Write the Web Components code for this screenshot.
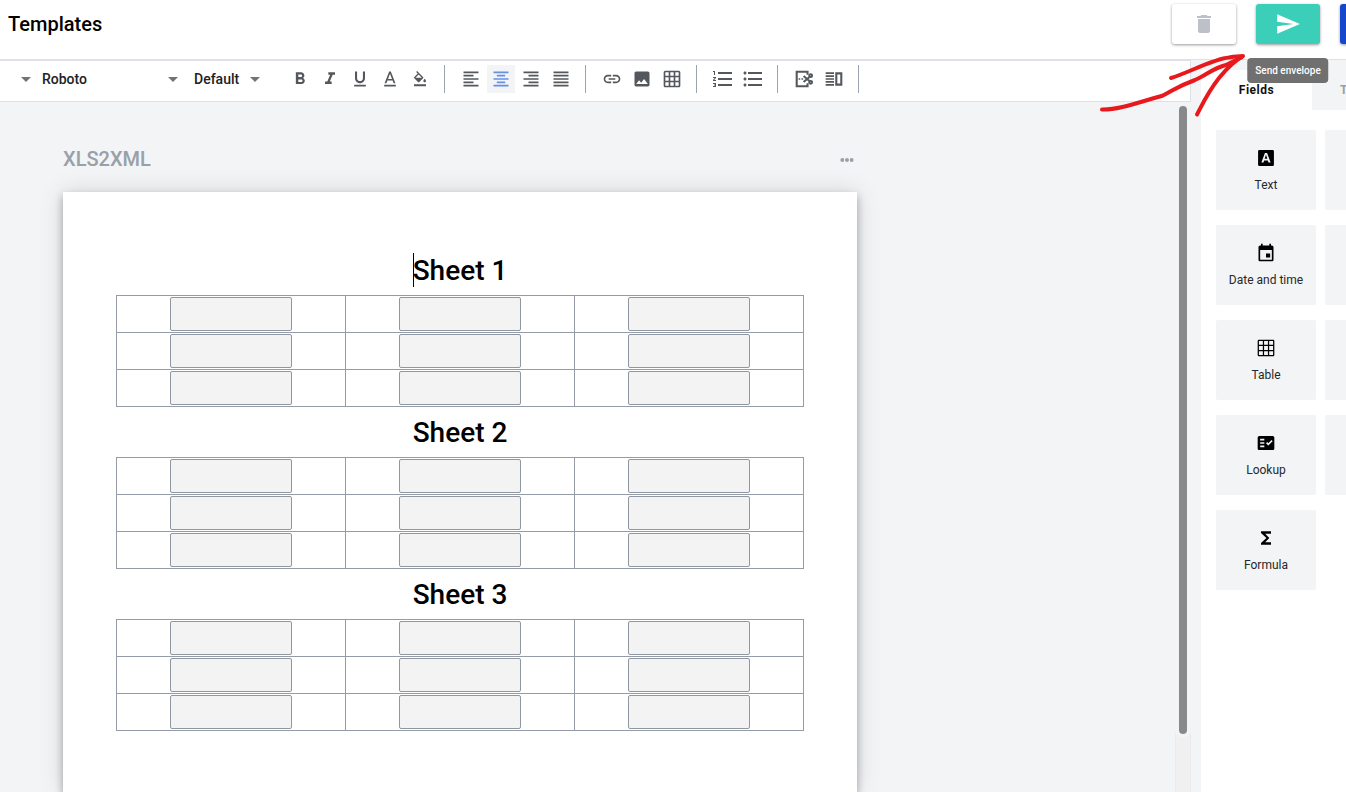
<!DOCTYPE html>
<html lang="en">
<head>
<meta charset="utf-8">
<title>Templates</title>
<style>
  html, body { margin: 0; height: 100%; }
  body { font-family: Roboto, "Liberation Sans", sans-serif; background: #fff; color: #000; overflow: hidden; }
</style>
</head>
<body>
<template-app></template-app>
<script>
const ICONS = {
  trash: '<path d="M6 19c0 1.100.9 2 2 2h8c1.100 0 2-.9 2-2V7H6v12zM19 4h-3.500l-1-1h-5l-1 1H5v2h14V4z"/>',
  send: '<path d="M2 21l21-9L2 3v7l15 2-15 2z"/>',
  down: '<path d="M7 10l5 5 5-5z"/>',
  bold: '<path d="M15.600 10.790c.970-.670 1.650-1.770 1.650-2.790 0-2.260-1.750-4-4-4H7v14h7.040c2.090 0 3.710-1.700 3.710-3.790 0-1.520-.860-2.820-2.150-3.420zM10 6.500h3c.830 0 1.500.670 1.500 1.500s-.670 1.500-1.500 1.500h-3v-3zm3.500 9H10v-3h3.500c.830 0 1.500.670 1.500 1.500s-.670 1.500-1.500 1.500z"/>',
  italic: '<path d="M10 4v3h2.210l-3.420 8H6v3h8v-3h-2.210l3.420-8H18V4z"/>',
  underline: '<path d="M12 17c3.310 0 6-2.690 6-6V3h-2.500v8c0 1.930-1.570 3.500-3.500 3.500S8.500 12.930 8.500 11V3H6v8c0 3.310 2.690 6 6 6zm-7 2v2h14v-2H5z"/>',
  color: '<path d="M5 19h14v2H5zM11 3L5.500 17h2.200l1.200-3.200h6.200l1.200 3.200h2.200L13 3h-2zm-1.400 9L12 5.700 14.400 12H9.600z"/>',
  fill: '<path d="M16.560 8.940L7.620 0 6.210 1.410l2.380 2.380-5.150 5.150c-.590.590-.590 1.540 0 2.120l5.500 5.500c.290.290.680.440 1.060.440s.770-.150 1.060-.440l5.500-5.500c.590-.580.590-1.530 0-2.120zM5.210 10L10 5.210 14.790 10H5.210zM19 11.500s-2 2.170-2 3.500c0 1.100.900 2 2 2s2-.900 2-2c0-1.330-2-3.500-2-3.500zM3 20h18v2.800H3z"/>',
  left: '<path d="M15 15H3v2h12v-2zm0-8H3v2h12V7zM3 13h18v-2H3v2zm0 8h18v-2H3v2zM3 3v2h18V3H3z"/>',
  center: '<path d="M7 15v2h10v-2H7zm-4 6h18v-2H3v2zm0-8h18v-2H3v2zm4-6v2h10V7H7zM3 3v2h18V3H3z"/>',
  right: '<path d="M3 21h18v-2H3v2zm6-4h12v-2H9v2zm-6-4h18v-2H3v2zm6-4h12V7H9v2zM3 3v2h18V3H3z"/>',
  justify: '<path d="M3 21h18v-2H3v2zm0-4h18v-2H3v2zm0-4h18v-2H3v2zm0-4h18V7H3v2zm0-6v2h18V3H3z"/>',
  link: '<path d="M3.900 12c0-1.710 1.390-3.100 3.100-3.100h4V7H7c-2.760 0-5 2.240-5 5s2.240 5 5 5h4v-1.900H7c-1.710 0-3.100-1.390-3.100-3.100zM8 13h8v-2H8v2zm9-6h-4v1.900h4c1.710 0 3.100 1.390 3.100 3.100s-1.390 3.100-3.100 3.100h-4V17h4c2.760 0 5-2.240 5-5s-2.240-5-5-5z"/>',
  image: '<path d="M21 19V5c0-1.100-.9-2-2-2H5c-1.100 0-2 .9-2 2v14c0 1.100.9 2 2 2h14c1.100 0 2-.9 2-2zM8.500 13.500l2.500 3.010L14.500 12l4.500 6H5l3.500-4.500z"/>',
  grid: '<path d="M20 2H4c-1.100 0-2 .9-2 2v16c0 1.100.9 2 2 2h16c1.100 0 2-.9 2-2V4c0-1.100-.9-2-2-2zM8 20H4v-4h4v4zm0-6H4v-4h4v4zm0-6H4V4h4v4zm6 12h-4v-4h4v4zm0-6h-4v-4h4v4zm0-6h-4V4h4v4zm6 12h-4v-4h4v4zm0-6h-4v-4h4v4zm0-6h-4V4h4v4z"/>',
  numbered: '<path d="M2 17h2v.5H3v1h1v.5H2v1h3v-4H2v1zm1-9h1V4H2v1h1v3zm-1 3h1.800L2 13.100v.9h3v-1H3.200L5 10.900V10H2v1zm5-6v2h14V5H7zm0 14h14v-2H7v2zm0-6h14v-2H7v2z"/>',
  bullets: '<path d="M4 10.500c-.83 0-1.500.67-1.500 1.500s.67 1.500 1.500 1.500 1.500-.67 1.500-1.500-.67-1.500-1.500-1.500zm0-6c-.83 0-1.500.67-1.500 1.500S3.170 7.500 4 7.500 5.500 6.830 5.500 6 4.830 4.500 4 4.500zm0 12c-.83 0-1.500.68-1.500 1.500s.68 1.500 1.500 1.500 1.500-.68 1.500-1.500-.67-1.500-1.500-1.500zM7 19h14v-2H7v2zm0-6h14v-2H7v2zm0-8v2h14V5H7z"/>',
  cut: '<path d="M2 2h15.500v5H15V4.500H4.500v15H15V17h2.500v5H2zM5.500 11h2v2h-2zM9 11h2v2H9z"/><g fill="none" stroke="currentColor" stroke-width="2.400"><circle cx="20" cy="8" r="1.700"/><circle cx="20" cy="16" r="1.700"/><path d="M18.600 9.500L11.500 15.500M18.600 14.500L11.500 8.500"/></g>',
  columns: '<path d="M2 4h10v2H2zM2 7.500h10v2H2zM2 11h10v2H2zM2 14.500h10v2H2zM2 18h10v2H2zM13.500 4H22v16h-8.500zM16 6.500v11h3.500v-11z" fill-rule="evenodd"/>',
  more: '<circle cx="5" cy="12" r="2.900"/><circle cx="12" cy="12" r="2.900"/><circle cx="19" cy="12" r="2.900"/>',
  text: '<path d="M4 2.500h16A1.500 1.500 0 0 1 21.500 4v16a1.500 1.500 0 0 1-1.500 1.500H4A1.500 1.500 0 0 1 2.500 20V4A1.500 1.500 0 0 1 4 2.500zM10.700 6L6.500 17.500H9l.8-2.500h4.400l.8 2.500h2.500L13.300 6zM10.400 13L12 8.200 13.600 13z" fill-rule="evenodd"/>',
  date: '<path d="M19 3h-1V1h-2v2H8V1H6v2H5c-1.110 0-2 .9-2 2v15c0 1.100.89 2 2 2h14c1.100 0 2-.9 2-2V5c0-1.100-.9-2-2-2zm0 17H5V8.500h14V20zM12 12.500h5v5h-5z"/>',
  lookup: '<path d="M20 3.500H4c-1.100 0-2 .9-2 2v13c0 1.100.9 2 2 2h16c1.100 0 2-.9 2-2v-13c0-1.100-.9-2-2-2zM10 17H5v-2h5v2zm0-4H5v-2h5v2zm0-4H5V7h5v2zm4.800 6L12 12.200l1.400-1.400 1.400 1.400 3.800-3.800L20 9.800z"/>',
  table: '<path d="M3.500 2h17A1.500 1.500 0 0 1 22 3.500v17a1.500 1.500 0 0 1-1.500 1.500h-17A1.500 1.500 0 0 1 2 20.500v-17A1.500 1.500 0 0 1 3.500 2zM3.500 3.500v4.700h4.700V3.500zM9.700 3.500v4.700h4.600V3.500zM15.800 3.500v4.700h4.700V3.500zM3.500 9.700v4.600h4.700V9.700zM9.700 9.700v4.600h4.600V9.700zM15.800 9.700v4.600h4.700V9.700zM3.500 15.800v4.700h4.700v-4.700zM9.700 15.800v4.700h4.600v-4.700zM15.800 15.800v4.700h4.700v-4.700z" fill-rule="evenodd"/>',
  sigma: '<path d="M18 4H6v2l6.500 6L6 18v2h12v-3h-7l5-5-5-5h7z"/>'
};

function define(name, render) {
  customElements.define(name, class extends HTMLElement {
    connectedCallback() {
      if (this.shadowRoot) return;
      const t = document.createElement('template');
      t.innerHTML = render(this);
      this.attachShadow({ mode: 'open' }).append(t.content.cloneNode(true));
    }
  });
}

define('ui-icon', el => `
  <style>
    :host { display: block; width: var(--icon, 20px); height: var(--icon, 20px); }
    svg { display: block; width: 100%; height: 100%; fill: currentColor; }
  </style>
  <svg viewBox="0 0 24 24" aria-hidden="true">${ICONS[el.getAttribute('name')] || ''}</svg>`);

define('action-button', el => `
  <style>
    :host { display: block; position: relative; flex: none; --icon: 24px; }
    button { display: flex; align-items: center; justify-content: center; width: 64px; height: 40px; padding: 0;
      border: 0; border-radius: 3px; background: var(--fill, #fff); color: var(--ink, #fff);
      box-shadow: 0 1px 3px rgba(0,0,0,.4); }
  </style>
  <button type="button" aria-label="${el.getAttribute('label')}"><slot></slot></button>
  <slot name="tip"></slot>`);

define('hover-tip', () => `
  <style>
    :host { position: absolute; z-index: 3; top: 54px; left: 50%; transform: translateX(-50%); display: block;
      padding: 0 8px; border-radius: 4px; background: #707070; color: #fff;
      font-size: 10px; font-weight: 500; line-height: 25px; white-space: nowrap; }
  </style>
  <slot></slot>`);

define('app-header', () => `
  <style>
    :host { display: flex; justify-content: space-between; height: 59px; box-sizing: border-box; padding: 4px 0 0 8px;
      background: #fff; }
    h1 { margin: 0; font-size: 20px; line-height: 40px; font-weight: 500; }
    .actions { display: flex; gap: 20px; width: 174px; }
    .trash { --ink: #bcc1c9; }
    .send { --fill: #3bceb8; --icon: 26px; }
    .next { --fill: #1447cc; }
  </style>
  <h1>Templates</h1>
  <div class="actions">
    <action-button class="trash" label="Delete"><ui-icon name="trash"></ui-icon></action-button>
    <action-button class="send" label="Send envelope"><ui-icon name="send"></ui-icon><hover-tip slot="tip">Send envelope</hover-tip></action-button>
    <action-button class="next" label="Next"></action-button>
  </div>`);

define('tool-select', el => `
  <style>
    :host { display: flex; align-items: center; }
    select { flex: 1; min-width: 0; appearance: none; border: 0; padding: 0; margin: 0; background: none; color: #202124;
      font: 500 14px/28px Roboto, "Liberation Sans", sans-serif; }
    ui-icon { --icon: 24px; color: #707478; flex: none; }
  </style>
  <select aria-label="${el.getAttribute('label')}"><option>${el.getAttribute('value') || ''}</option></select>
  <ui-icon name="down"></ui-icon>`);

define('tool-button', el => `
  <style>
    :host { display: block; }
    button { display: flex; align-items: center; justify-content: center; width: 28px; height: 28px; padding: 0;
      border: 0; background: none; color: #54585c; }
    button[aria-pressed=true] { background: #f3f4f6; color: #6690e6; }
  </style>
  <button type="button" aria-label="${el.getAttribute('icon')}" aria-pressed="${el.hasAttribute('active')}"><ui-icon name="${el.getAttribute('icon')}"></ui-icon></button>`);

define('editor-toolbar', () => {
  const groups = [['bold', 'italic', 'underline', 'color', 'fill'], ['left', 'center', 'right', 'justify'],
    ['link', 'image', 'grid'], ['numbered', 'bullets'], ['cut', 'columns']];
  const size = { fill: 'small', numbered: 'large', bullets: 'large' };
  return `
  <style>
    :host { display: flex; align-items: center; gap: 2px; height: 42px; box-sizing: border-box; padding-bottom: 4px;
      border: 1px solid #dde0e4; border-left: 0; background: #fff; }
    .style { width: 38px; }
    .font { width: 143px; margin-left: 2px; }
    .size { width: 73px; margin: 0 17px 0 7px; }
    hr { width: 1px; height: 28px; margin: 0 10px 0 8px; border: 0; background: #9aa3ae; }
    .small { --icon: 16px; }
    .large { --icon: 24px; }
  </style>
  <tool-select class="style" label="Paragraph style"></tool-select>
  <tool-select class="font" label="Font" value="Roboto"></tool-select>
  <tool-select class="size" label="Font size" value="Default"></tool-select>
  ${groups.map(g => g.map(i => `<tool-button icon="${i}" class="${size[i] || ''}" ${i === 'center' ? 'active' : ''}></tool-button>`).join('') + '<hr>').join('')}`;
});

define('field-sheet', el => {
  const name = el.getAttribute('name');
  const cell = (r, c) => `<td><input type="text" aria-label="${name}, row ${r}, column ${c}"></td>`;
  return `
  <style>
    :host { display: block; }
    h2 { margin: 0; padding-top: 2px; font-size: 28px; line-height: 48px; font-weight: 500; text-align: center; }
    span { position: relative; }
    :host([caret]) span::before { content: ""; position: absolute; left: 0; bottom: 0; width: 1px; height: 34px; background: #000; }
    table { width: 100%; border-collapse: collapse; table-layout: fixed; }
    td { height: 36px; padding: 0; border: 1px solid #959ca7; text-align: center; }
    input { display: block; box-sizing: border-box; width: 122px; height: 34px; margin: 0 auto; padding: 0 8px;
      border: 1px solid #8f97a0; border-radius: 2px; background: #f3f3f3; }
  </style>
  <h2><span>${name}</span></h2>
  <table><tbody>${[1, 2, 3].map(r => `<tr>${[1, 2, 3].map(c => cell(r, c)).join('')}</tr>`).join('')}</tbody></table>`;
});

define('document-view', () => `
  <style>
    :host { display: flex; min-height: 0; overflow: hidden; background: #f3f4f6; }
    main { flex: 1; min-width: 0; padding: 42px 0 0 63px; }
    .doc { width: 794px; display: flex; flex-direction: column; min-height: 100%; }
    .title { display: flex; justify-content: space-between; align-items: center; height: 32px; margin-bottom: 16px; color: #98a0a9; }
    h2 { margin: 0; padding-bottom: 2px; font-size: 20px; line-height: 30px; font-weight: 500; }
    .title button { display: flex; align-items: center; justify-content: center; width: 20px; height: 20px; padding: 0; border: 0; background: none; color: #98a0a9; --icon: 16px; }
    article { flex: 1; padding: 53px 53px 60px; background: #fff; box-shadow: 0 0 24px rgba(0,0,0,.12), 0 4px 8px rgba(0,0,0,.3); }
    .scroll { display: flex; flex-direction: column; width: 16px; box-sizing: border-box; background: #f0f0f0; border: solid #e9eaeb; border-width: 0 1px; }
    .thumb { height: 92%; box-sizing: border-box; margin: 0 -1px; padding: 4px 4px 3px; background: #f3f4f6; border-radius: 0 0 6px 6px; }
    .thumb div { height: 100%; border-radius: 4px; background: #88898a; }
  </style>
  <main><div class="doc">
    <div class="title"><h2>XLS2XML</h2><button type="button" aria-label="More"><ui-icon name="more"></ui-icon></button></div>
    <article>
      <field-sheet name="Sheet 1" caret></field-sheet>
      <field-sheet name="Sheet 2"></field-sheet>
      <field-sheet name="Sheet 3"></field-sheet>
    </article>
  </div></main>
  <div class="scroll"><div class="thumb"><div></div></div></div>`);

define('field-tile', el => `
  <style>
    :host { display: block; }
    button { display: flex; flex-direction: column; align-items: center; gap: 8px; width: 100%; height: 80px; padding: 18px 0 0;
      border: 0; border-radius: 2px; background: #f3f4f6; color: #000; font: 400 12px/18px Roboto, "Liberation Sans", sans-serif; white-space: nowrap; }
    ui-icon { --icon: 20px; }
    span { color: #26282b; }
  </style>
  <button type="button" ${el.hasAttribute('icon') ? '' : 'aria-label="Field"'}><ui-icon name="${el.getAttribute('icon')}"></ui-icon><span><slot></slot></span></button>`);

define('fields-panel', () => `
  <style>
    :host { display: block; overflow: hidden; background: #fff; }
    .tabs { display: flex; background: #f3f4f6; }
    .tabs button { flex: none; width: 111px; height: 40px; padding: 0; border: 0; background: none; color: #98a0a9;
      font: 700 12px/40px Roboto, "Liberation Sans", sans-serif; letter-spacing: .5px; }
    .tabs .more { padding-left: 28px; text-align: left; }
    .tabs [aria-selected=true] { background: #fff; color: #111; }
    .tiles { display: grid; grid-template-columns: 100px 100px; gap: 15px 9px; padding: 20px 15px; }
  </style>
  <div class="tabs" role="tablist">
    <button type="button" role="tab" aria-selected="true">Fields</button>
    <button type="button" role="tab" class="more" aria-selected="false">T</button>
  </div>
  <div class="tiles">
    <field-tile icon="text">Text</field-tile><field-tile></field-tile>
    <field-tile icon="date">Date and time</field-tile><field-tile></field-tile>
    <field-tile icon="table">Table</field-tile><field-tile></field-tile>
    <field-tile icon="lookup">Lookup</field-tile><field-tile></field-tile>
    <field-tile icon="sigma">Formula</field-tile>
  </div>`);

define('pen-arrow', () => `
  <style>
    :host { position: absolute; z-index: 2; top: 50px; right: 96px; display: block; pointer-events: none; }
    svg { display: block; fill: none; stroke: #e8191c; stroke-width: 4; stroke-linecap: round; stroke-linejoin: round; }
  </style>
  <svg width="155" height="70" viewBox="1095 50 155 70" aria-hidden="true">
    <path d="M1102 109.500C1118 110 1138 102.500 1163 95.500C1174 90 1176 87 1195 80C1207 75 1213 68 1226 65L1242 57"/>
    <path d="M1171 78C1188 73 1213 59 1229 57.500Q1238 56 1243 56C1236 60 1228 67 1219 78C1208 92 1203 103 1197 114.500"/>
  </svg>`);

define('template-app', () => `
  <style>
    :host { display: flex; flex-direction: column; height: 100vh; position: relative; overflow: hidden; }
    .body { flex: 1; min-height: 0; display: grid; grid-template-columns: minmax(0, 1fr) 145px; column-gap: 10px;
      background: #f3f4f6; border-top: 1px solid #dde0e4; }
    .editor { display: grid; grid-template-rows: auto minmax(0, 1fr); min-height: 0; }
    fields-panel { margin-top: 10px; }
  </style>
  <app-header></app-header>
  <div class="body">
    <div class="editor"><editor-toolbar></editor-toolbar><document-view></document-view></div>
    <fields-panel></fields-panel>
  </div>
  <pen-arrow></pen-arrow>`);
</script>
</body>
</html>
